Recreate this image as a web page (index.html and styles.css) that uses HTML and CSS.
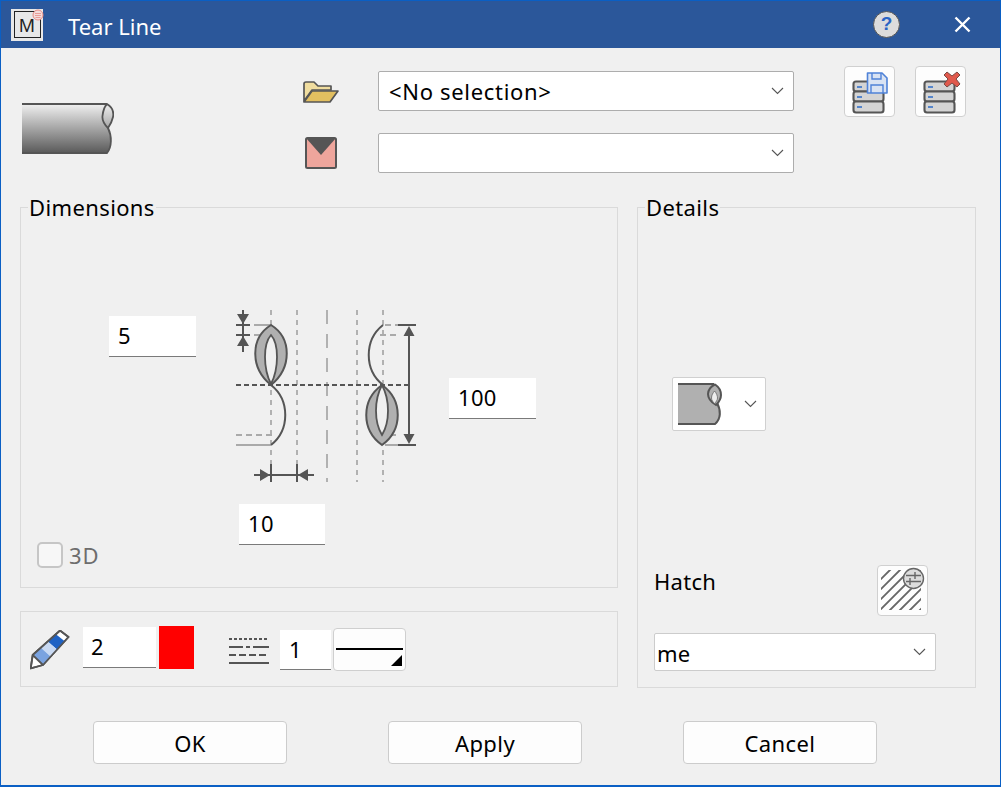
FILE: index.html
```html
<!DOCTYPE html>
<html lang="en">
<head>
<meta charset="utf-8">
<title>Tear Line</title>
<link rel="stylesheet" href="styles.css">
</head>
<body>
<div class="window">
  <header class="titlebar">
    <div class="app-icon">
      <span class="app-m">M</span>
      <svg class="app-badge" viewBox="0 0 12 12"><circle cx="6" cy="6" r="5" fill="#f3dcda" stroke="#e88a84" stroke-width="1"/><path d="M3 4.500h6M3 6.500h6M3.500 8.500h5" stroke="#e88a84" stroke-width=".8"/></svg>
    </div>
    <div class="title">Tear Line</div>
    <div class="help">?</div>
    <svg class="close" viewBox="0 0 17 17"><path d="M1.500 1.500l14 14M15.500 1.500l-14 14" stroke="#fff" stroke-width="2.400" fill="none"/></svg>
  </header>

  <section class="top">
    <svg class="pipe" viewBox="0 0 92 52">
      <defs><linearGradient id="pg" x1="0" y1="0" x2="0" y2="1"><stop offset="0" stop-color="#f0f0f0"/><stop offset="1" stop-color="#5a5a5a"/></linearGradient></defs>
      <path d="M0 1H85C90 4 92 9 91 14C90 19 88 22 86 25C90 33 90 44 85 50H0Z" fill="url(#pg)"/>
      <path d="M0 1H85M0 50H85C90 44 90 33 86 25" fill="none" stroke="#555" stroke-width="1.800"/>
      <path d="M85 1C90 4 92 9 91 14C90 19 88 22 86 25C82 21 80 17 80.500 13C81 8 83 3 85 1Z" fill="none" stroke="#555" stroke-width="1.800"/>
    </svg>
    <svg class="row-icon" viewBox="0 0 36 22">
      <path d="M1 20V3C1 2 2 1 3 1H11L15 5H28V9H9L1 20Z" fill="#f0dd9f" stroke="#555" stroke-width="1.700" stroke-linejoin="round"/>
      <path d="M1 21L9 10H35L27 21Z" fill="#e2bf60" stroke="#555" stroke-width="1.700" stroke-linejoin="round"/>
    </svg>
    <div class="combo combo-main combo-first"><span class="combo-text">&lt;No selection&gt;</span><svg class="chev" viewBox="0 0 13 8"><path d="M1 1l5.500 5.500L12 1" fill="none" stroke="#555" stroke-width="1.100"/></svg></div>
    <div class="tool-row">
      <button class="tool">
        <svg viewBox="1 1 49 49">
          <g fill="#d4d4d4" stroke="#555" stroke-width="2.100"><rect x="9.500" y="15.500" width="30" height="10" rx="2.500"/><rect x="9.500" y="25.500" width="30" height="10" rx="2.500"/><rect x="9.500" y="35.500" width="30" height="11" rx="2.500"/></g>
          <path d="M13 21h5M13 31h5M13 41h5" stroke="#2b6bc8" stroke-width="1.600"/>
          <path d="M23.500 7H38L43 12V27H23.500Z" fill="#d9e3f3" stroke="#4f82d8" stroke-width="1.600" stroke-linejoin="round"/>
          <path d="M28 7v6h9V7M27 27v-8h12v8" fill="none" stroke="#4f82d8" stroke-width="1.400"/>
        </svg>
      </button>
      <button class="tool">
        <svg viewBox="1 1 49 49">
          <g fill="#d4d4d4" stroke="#555" stroke-width="2.100"><rect x="9.500" y="15.500" width="30" height="10" rx="2.500"/><rect x="9.500" y="25.500" width="30" height="10" rx="2.500"/><rect x="9.500" y="35.500" width="30" height="11" rx="2.500"/></g>
          <path d="M13 21h5M13 31h5M13 41h5" stroke="#2b6bc8" stroke-width="1.600"/>
          <path d="M32 6l5 4 5-4 3 3-4 4 4 5-3 3-5-4-5 4-3-3 4-5-4-4Z" fill="#e0594c" stroke="#7a4a44" stroke-width="1"/>
        </svg>
      </button>
    </div>
    <svg class="row-icon env" viewBox="0 0 32 32">
      <rect x="1" y="1" width="30" height="30" rx="1.500" fill="#eea59c" stroke="#555" stroke-width="2"/>
      <path d="M1 1H31L16 18Z" fill="#555"/>
    </svg>
    <div class="combo combo-main"><span class="combo-text"></span><svg class="chev" viewBox="0 0 13 8"><path d="M1 1l5.500 5.500L12 1" fill="none" stroke="#555" stroke-width="1.100"/></svg></div>
  </section>

  <main class="body">
    <div class="left-col">
      <section class="group dims">
        <span class="legend">Dimensions</span>
        <div class="field f5">5</div>
        <div class="field f100">100</div>
        <div class="field f10">10</div>
        <svg class="diagram" viewBox="0 0 210 190">
          <g fill="none" stroke="#aaa" stroke-width="1.800">
            <path d="M51 10V182" stroke-dasharray="5 5"/>
            <path d="M77 10V182" stroke-dasharray="5 5"/>
            <path d="M107 10V182" stroke-dasharray="14 10"/>
            <path d="M137 10V182" stroke-dasharray="5 5"/>
            <path d="M163 10V182" stroke-dasharray="5 5"/>
            <path d="M34 25H51M16 145H51M165 145H178"/>
            <path d="M34 35H51M16 135H52M165 25H178M160 35H178M170 135H178" stroke-dasharray="6 4"/>
          </g>
          <path d="M16 85H190" stroke="#555" stroke-width="1.800" stroke-dasharray="5 3" fill="none"/>
          <path d="M51 25C30 38 30 68 51 85C72 68 72 38 51 25Z" fill="#b0b0b0" stroke="#555" stroke-width="2"/>
          <path d="M51 35C43 44 43 68 51 84C59 68 59 44 51 35Z" fill="#f0f0f0" stroke="#555" stroke-width="1.800"/>
          <path d="M162 85C141 100 141 130 162 145C183 130 183 100 162 85Z" fill="#b0b0b0" stroke="#555" stroke-width="2"/>
          <path d="M162 85C154 100 154 122 162 135C170 122 170 100 162 85Z" fill="#f0f0f0" stroke="#555" stroke-width="1.800"/>
          <path d="M51 85C70 100 70 130 51 145M163 25C144 40 144 70 163 85" fill="none" stroke="#555" stroke-width="2"/>
          <g fill="none" stroke="#555" stroke-width="2">
            <path d="M178 25H196M178 145H196M189 30V140"/>
            <path d="M16 25H30M16 35H30M23 10V52"/>
            <path d="M51 164V182M77 164V182M34 175H94"/>
          </g>
          <g fill="#555">
            <path d="M189 26L183.500 36H194.500ZM189 144L183.500 134H194.500Z"/>
            <path d="M23 24L17 14H29ZM23 36L17 46H29Z"/>
            <path d="M50 175L40 169V181ZM78 175L88 169V181Z"/>
          </g>
        </svg>
        <label class="check"><span class="box"></span><span class="check-text">3D</span></label>
      </section>
      <section class="group lines">
        <svg class="pencil" viewBox="0 0 40 40">
          <path d="M30 .5L38.500 7 13 35 .7 38.300 2.700 25Z" fill="#fff" stroke="#555" stroke-width="1.800" stroke-linejoin="round"/>
          <path d="M25.900 4.200L34.700 11.200 27 19.600 17.700 11.500Z" fill="#1f62c4"/>
          <path d="M17.700 11.500L27 19.600 20.600 26.600 10.900 17.700Z" fill="#c9daf3"/>
          <path d="M10.900 17.700L20.600 26.600 13 35 2.700 25Z" fill="#7aa3e0"/>
          <path d="M30 .5L38.500 7 13 35 .7 38.300 2.700 25ZM2.700 25L13 35" fill="none" stroke="#555" stroke-width="1.800" stroke-linejoin="round"/>
        </svg>
        <div class="field pen">2</div>
        <div class="swatch"></div>
        <svg class="line-icon" viewBox="0 0 40 26">
          <g stroke="#555" stroke-width="2" fill="none">
            <path d="M0 1H40" stroke-dasharray="3 2"/>
            <path d="M0 9H14M17 9H21M24 9H40"/>
            <path d="M0 17H40" stroke-dasharray="7 3"/>
            <path d="M0 25H40"/>
          </g>
        </svg>
        <div class="field ltype">1</div>
        <div class="line-pick"><span class="line-bar"></span><span class="corner"></span></div>
      </section>
    </div>

    <section class="group details">
      <span class="legend">Details</span>
      <div class="combo combo-end">
        <svg class="end-icon" viewBox="0 0 42 42">
          <path d="M0 1H38C42 6 43 12 40 20C44 28 44 36 38 41H0Z" fill="#b0b0b0"/>
          <path d="M0 1H36M0 41H37C43 36 43 27 39 20" fill="none" stroke="#555" stroke-width="2"/>
          <path d="M37 1.500C41 4 43 8 43 12C43 16 41 19 38 22C33 19 30 16 30 11C30 7 33 3 37 1.500Z" fill="#b0b0b0" stroke="#555" stroke-width="2"/>
          <path d="M36.500 8C38.500 10 39.500 13 39.500 15C39.500 17 38 19 36.500 20.500C35 19 33.500 17 33.500 15C33.500 12 35 10 36.500 8Z" fill="#ededed" stroke="#666" stroke-width=".8"/>
        </svg>
        <svg class="chev" viewBox="0 0 13 8"><path d="M1 1l5.500 5.500L12 1" fill="none" stroke="#555" stroke-width="1.100"/></svg>
      </div>
      <div class="hatch-row">
        <span class="hatch-label">Hatch</span>
        <button class="tool">
          <svg viewBox="1 1 49 49">
            <defs><clipPath id="hc"><rect x="4" y="5" width="40" height="40"/></clipPath></defs>
            <g stroke="#666" stroke-width="1.900" fill="none" clip-path="url(#hc)">
              <path d="M0 18L18 0M0 28L28 0M0 38L38 0M0 48L48 0M0 58L58 0M10 58L58 10M20 58L58 20M30 58L58 30M40 58L58 40"/>
            </g>
            <circle cx="36.500" cy="13.500" r="10" fill="#dcdcdc" stroke="#666" stroke-width="1.400"/>
            <path d="M29 10.500H44M29 16.500H44M38 7V14M33 13V20" stroke="#666" stroke-width="1.400" fill="none"/>
          </svg>
        </button>
      </div>
      <div class="combo combo-me"><span class="combo-text me">me</span><svg class="chev" viewBox="0 0 13 8"><path d="M1 1l5.500 5.500L12 1" fill="none" stroke="#555" stroke-width="1.100"/></svg></div>
    </section>
  </main>

  <footer class="footer">
    <button class="btn">OK</button>
    <button class="btn">Apply</button>
    <button class="btn">Cancel</button>
  </footer>
</div>
</body>
</html>
```

FILE: styles.css
```css
* { box-sizing: border-box; }
html, body { margin: 0; padding: 0; }
body { width: 1001px; height: 787px; overflow: hidden; font-family: "Noto Sans", "Open Sans", sans-serif; font-size: 22px; letter-spacing: .3px; color: #000; }
.window { width: 1001px; height: 787px; background: #f0f0f0; border: 1px solid #0a5fc4; border-bottom-width: 2px; display: flex; flex-direction: column; }

.titlebar { height: 47px; flex: none; background: #2b579a; display: flex; align-items: center; padding-left: 10px; }
.app-icon { position: relative; width: 32px; height: 32px; background: #e8e8e8; flex: none; display: flex; align-items: center; justify-content: center; }
.app-icon::before { content: ""; position: absolute; left: 3px; top: 2px; right: 2px; bottom: 3px; border: 1px solid #222; }
.app-m { position: relative; font-size: 18px; line-height: 1; color: #222; letter-spacing: 0; }
.app-badge { position: absolute; right: -1px; top: 0; width: 12px; height: 12px; }
.title { margin-left: 25px; color: #fff; font-size: 22px; line-height: 30px; letter-spacing: 0; width: 805px; padding-top: 3px; height: 33px; }
.help { width: 27px; height: 27px; flex: none; border-radius: 50%; background: #dcdcdc; border: 1px solid #555; color: #2b64c4; font-weight: 700; font-size: 19px; line-height: 24px; text-align: center; font-family: "Liberation Sans", sans-serif; letter-spacing: 0; }
.close { width: 17px; height: 17px; margin-left: 54px; flex: none; }

.top { height: 159px; flex: none; padding: 18px 0 0 21px; display: grid; grid-template-columns: 281px 75px 416px auto; grid-template-rows: 51px 40px; row-gap: 16px; align-items: center; justify-content: start; }
.pipe { grid-row: 1 / span 2; width: 92px; height: 52px; align-self: end; margin-bottom: 18px; }
.row-icon { width: 36px; height: 22px; }
.row-icon.env { width: 32px; height: 32px; margin-left: 2px; }

.combo { background: #fff; border: 1px solid #adadad; border-radius: 2px; display: flex; align-items: center; justify-content: space-between; }
.combo-main { height: 40px; padding: 0 9px 0 10px; }
.combo-first { align-self: start; margin-top: 5px; }
.combo-text { font-size: 22px; line-height: 30px; letter-spacing: .68px; }
.chev { width: 13px; height: 8px; flex: none; }
.tool-row { display: flex; gap: 20px; margin-left: 50px; }
.tool { width: 51px; height: 51px; padding: 0; border: 1px solid #d0d0d0; border-radius: 4px; background: #fdfdfd; display: block; }
.tool svg { display: block; width: 49px; height: 49px; }

.body { flex: none; margin-left: 19px; display: grid; grid-template-columns: 598px 339px; column-gap: 19px; }
.left-col { display: flex; flex-direction: column; gap: 23px; }
.group { position: relative; border: 1px solid #dadada; }
.legend { position: absolute; left: 7px; top: -16px; padding: 0 1px; background: #f0f0f0; font-size: 22px; line-height: 30px; letter-spacing: .38px; }

.dims { height: 381px; }
.diagram { position: absolute; left: 199px; top: 92px; width: 210px; height: 190px; }
.field { background: #fff; border-bottom: 1px solid #7a7a7a; font-size: 22px; line-height: 30px; padding: 4px 9px; height: 41px; }
.f5 { position: absolute; left: 88px; top: 108px; width: 87px; }
.f100 { position: absolute; left: 428px; top: 170px; width: 87px; }
.f10 { position: absolute; left: 218px; top: 296px; width: 86px; }
.check { position: absolute; left: 16px; top: 334px; display: flex; align-items: center; gap: 6px; color: #6d6d6d; }
.box { width: 26px; height: 26px; border: 2px solid #c6c6c6; border-radius: 5px; background: #f7f7f7; }
.check-text { font-size: 22px; line-height: 26px; letter-spacing: .8px; }

.lines { height: 76px; display: flex; align-items: center; padding-left: 9px; }
.pencil { width: 40px; height: 40px; flex: none; margin-top: 2px; }
.pen { width: 73px; margin-left: 13px; padding: 4px 8px; margin-top: -3px; }
.swatch { width: 35px; height: 43px; margin-left: 3px; background: #f00; margin-top: -3px; }
.line-icon { width: 40px; height: 26px; margin-left: 35px; margin-top: 3px; flex: none; }
.ltype { width: 51px; height: 40px; margin-left: 11px; padding: 4px 9px; margin-top: 2px; }
.line-pick { position: relative; width: 73px; height: 43px; margin-left: 2px; background: #fdfdfd; border: 1px solid #cfcfcf; border-radius: 4px; margin-top: 1px; }
.line-bar { position: absolute; left: 2px; right: 2px; top: 19px; height: 2px; background: #000; }
.corner { position: absolute; right: 3px; bottom: 4px; width: 0; height: 0; border-style: solid; border-width: 0 0 11px 11px; border-color: transparent transparent #000 transparent; }

.details { height: 481px; padding: 169px 0 0 16px; display: flex; flex-direction: column; }
.combo-end { width: 94px; height: 54px; margin-left: 18px; padding: 0 8px 0 4px; border-color: #d0d0d0; }
.end-icon { width: 44px; height: 42px; overflow: visible; }
.hatch-row { width: 274px; margin-top: 134px; display: flex; justify-content: space-between; align-items: flex-start; }
.hatch-label { font-size: 22px; line-height: 32px; }
.combo-me { width: 282px; height: 38px; margin-top: 17px; padding: 0 9px 0 2px; border-color: #cccccc; }
.me { letter-spacing: .2px; padding-top: 2px; }

.footer { flex: none; margin-top: 33px; padding-left: 92px; display: flex; gap: 101px; }
.btn { width: 194px; height: 43px; padding: 0; background: #fdfdfd; border: 1px solid #cccccc; border-radius: 4px; font-family: inherit; font-size: 22px; letter-spacing: .4px; color: #000; }
```
